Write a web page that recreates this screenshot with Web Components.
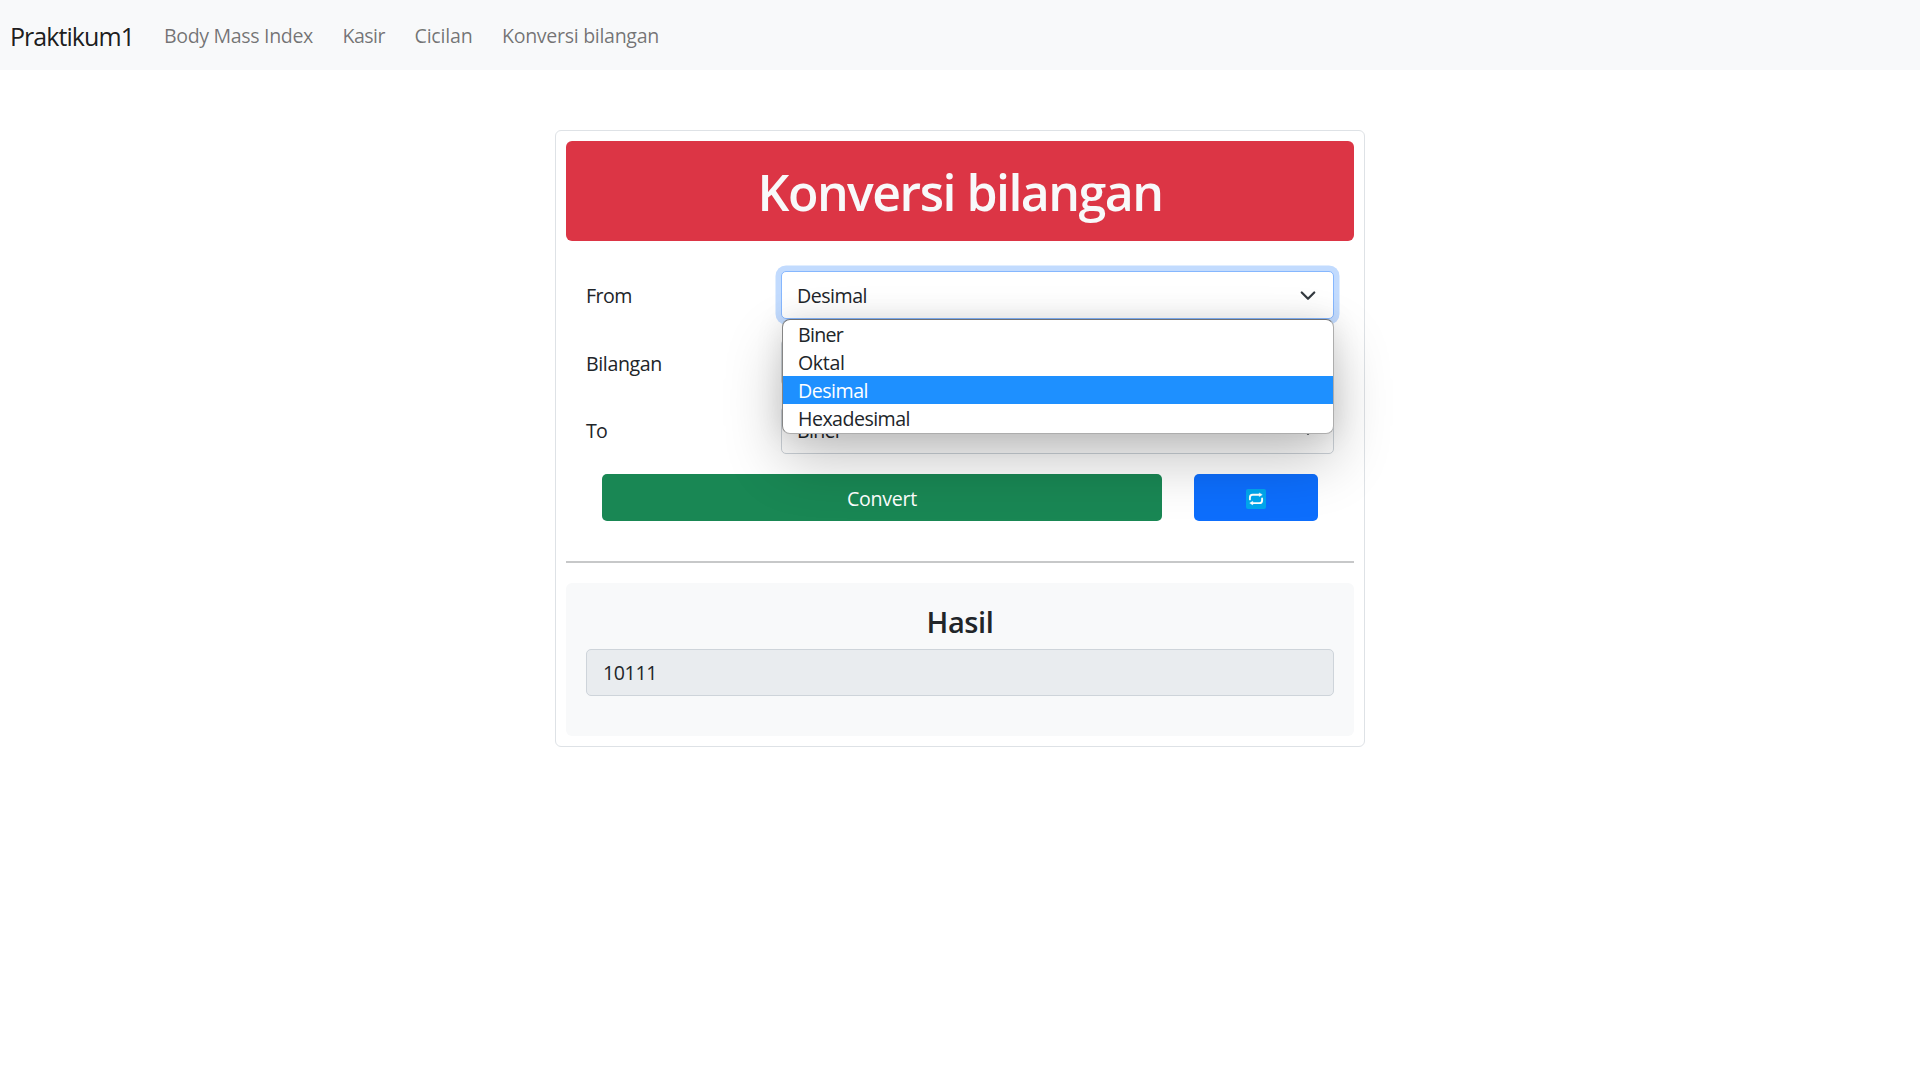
<!DOCTYPE html>
<html lang="id">
<head>
<meta charset="utf-8">
<title>Konversi bilangan</title>
<style>
html,body{margin:0;background:#fff}
body{font:19.6px/30px "Open Sans","Noto Sans",sans-serif;color:#212529;height:1080px;overflow:hidden}
</style>
</head>
<body>
<konversi-app></konversi-app>
<script>
const define=(name,html,init)=>customElements.define(name,class extends HTMLElement{
  connectedCallback(){
    if(this.shadowRoot)return;
    const t=document.createElement('template');
    t.innerHTML=html;
    this.attachShadow({mode:'open'}).append(t.content.cloneNode(true));
    if(init)init.call(this);
  }
});

/* Inline text set to a given advance width through its tracking */
define('fit-text','<style>:host{display:inline-block;white-space:nowrap}</style><slot></slot>',function(){
  const want=+this.getAttribute('w');
  const have=this.getBoundingClientRect().width;
  this.style.letterSpacing=((want-have)/this.textContent.length).toFixed(3)+'px';
});

define('nav-bar',`<style>
:host{display:flex;align-items:center;height:70px;padding:0 10px;box-sizing:border-box;background:#f8f9fa;color:rgba(0,0,0,.55)}
.brand{font-size:25px;line-height:38px;color:rgba(0,0,0,.9);margin-right:30px;padding-top:1px}
nav{display:flex;gap:29.5px;padding-top:2px}
</style>
<div class="brand"><fit-text w="124">Praktikum1</fit-text></div>
<nav><fit-text w="149">Body Mass Index</fit-text><fit-text w="42.5">Kasir</fit-text><fit-text w="58">Cicilan</fit-text><fit-text w="157">Konversi bilangan</fit-text></nav>`);

define('title-banner',`<style>
:host{display:flex;justify-content:center;align-items:center;height:100px;border-radius:6px;background:#dc3545;color:#f8f9fa}
h1{margin:0;font-size:50px;font-weight:650;line-height:60px;padding-top:1px}
</style><h1><slot></slot></h1>`);

define('form-row',`<style>
:host{display:flex;align-items:center;height:47.5px;padding:0 20px;margin-bottom:20px}
.label{width:195px;padding-top:3px}
.field{flex:1;min-width:0}
</style><div class="label"><slot name="label"></slot></div><div class="field"><slot></slot></div>`);

define('select-box',`<style>
:host{display:flex;position:relative;align-items:center;justify-content:space-between;box-sizing:border-box;height:47.5px;padding:2px 15px 0;border:1px solid #ced4da;border-radius:5px;background:#fff}
:host([open]){border-color:#86b7fe;box-shadow:0 0 0 5.5px #c2dbfe}
svg{width:20px;height:15px;display:block}
:host([plain]) svg{display:none}
</style><slot></slot>
<svg viewBox="0 0 16 12"><path d="M3 3.6 8 8.6l5-5" fill="none" stroke="#343a40" stroke-width="1.8" stroke-linecap="round" stroke-linejoin="round"/></svg>
<slot name="menu"></slot>`);

define('option-menu',`<style>
:host{position:absolute;z-index:5;left:0;right:-1px;top:47px;box-sizing:border-box;height:115px;border:1px solid #adadad;border-top-color:#6d6f73;border-left-color:#858585;border-radius:8px;background:#fff;box-shadow:0 26px 58px rgba(0,0,0,.23),0 0 28px rgba(0,0,0,.1);overflow:hidden}
::slotted(div){height:28px;line-height:30px;padding-left:15px}
::slotted(.on){background:#1e90ff;color:#fff}
</style><slot></slot>`);

define('push-button',`<style>
:host{display:flex;align-items:center;justify-content:center;box-sizing:border-box;height:47px;padding-top:3px;border-radius:5px;background:#198754;color:#fff}
:host([kind=primary]){background:#0d6efd}
</style><slot></slot>`);

define('repeat-icon',`<style>:host,svg{display:block;width:20px;height:20px}</style>
<svg viewBox="0 0 20 20"><rect width="20" height="20" rx="2" fill="#00a6ed"/>
<path d="M3.9 10.4V8.4C3.9 6.6 5 5.7 6.6 5.7H14M16.1 9.4v2c0 1.8-1.1 2.7-2.7 2.7H6" fill="none" stroke="#fff" stroke-width="1.9" stroke-linecap="round"/>
<path d="M13.2 3.9 16.3 5.7 13.2 7.6ZM6.8 12.2 3.7 14.1 6.8 15.9Z" fill="#fff" stroke="#fff" stroke-width=".4" stroke-linejoin="round"/></svg>`);

define('result-panel',`<style>
:host{display:block;box-sizing:border-box;height:153px;padding:21px 20px 0;border-radius:6px;background:#f8f9fa}
h4{margin:0 0 9px;font-size:29px;font-weight:560;line-height:36px;text-align:center}
.out{display:flex;align-items:center;box-sizing:border-box;height:47px;padding:2px 16px 0;border:1px solid #ced4da;border-radius:5px;background:#e9ecef}
</style><h4><slot name="title"></slot></h4><div class="out"><slot></slot></div>`);

define('konversi-app',`<style>
:host{display:block}
.card{width:810px;height:617px;box-sizing:border-box;margin:60px auto 0;padding:10px;border:1px solid #dee2e6;border-radius:6px;background:#fff}
.form{padding-top:30px}
.actions{display:flex;gap:32px;padding:0 36px;margin-bottom:40px}
.go{flex:none;width:560px}.swap{flex:none;width:124px}
hr{margin:0 0 20px;border:0;height:2px;background:#c7c8c9}
</style>
<nav-bar></nav-bar>
<div class="card">
<title-banner><fit-text w="405">Konversi bilangan</fit-text></title-banner>
<div class="form">
<form-row><fit-text slot="label" w="46">From</fit-text><select-box open><fit-text w="70">Desimal</fit-text>
<option-menu slot="menu"><div><fit-text w="45">Biner</fit-text></div><div><fit-text w="46.5">Oktal</fit-text></div><div class="on"><fit-text w="70">Desimal</fit-text></div><div><fit-text w="112">Hexadesimal</fit-text></div></option-menu></select-box></form-row>
<form-row><fit-text slot="label" w="76">Bilangan</fit-text><select-box plain></select-box></form-row>
<form-row><fit-text slot="label" w="21">To</fit-text><select-box><fit-text w="45">Biner</fit-text></select-box></form-row>
<div class="actions"><push-button class="go"><fit-text w="70">Convert</fit-text></push-button><push-button class="swap" kind="primary"><repeat-icon></repeat-icon></push-button></div>
</div>
<hr>
<result-panel><fit-text slot="title" w="67">Hasil</fit-text><fit-text w="54">10111</fit-text></result-panel>
</div>`);
</script>
</body>
</html>
